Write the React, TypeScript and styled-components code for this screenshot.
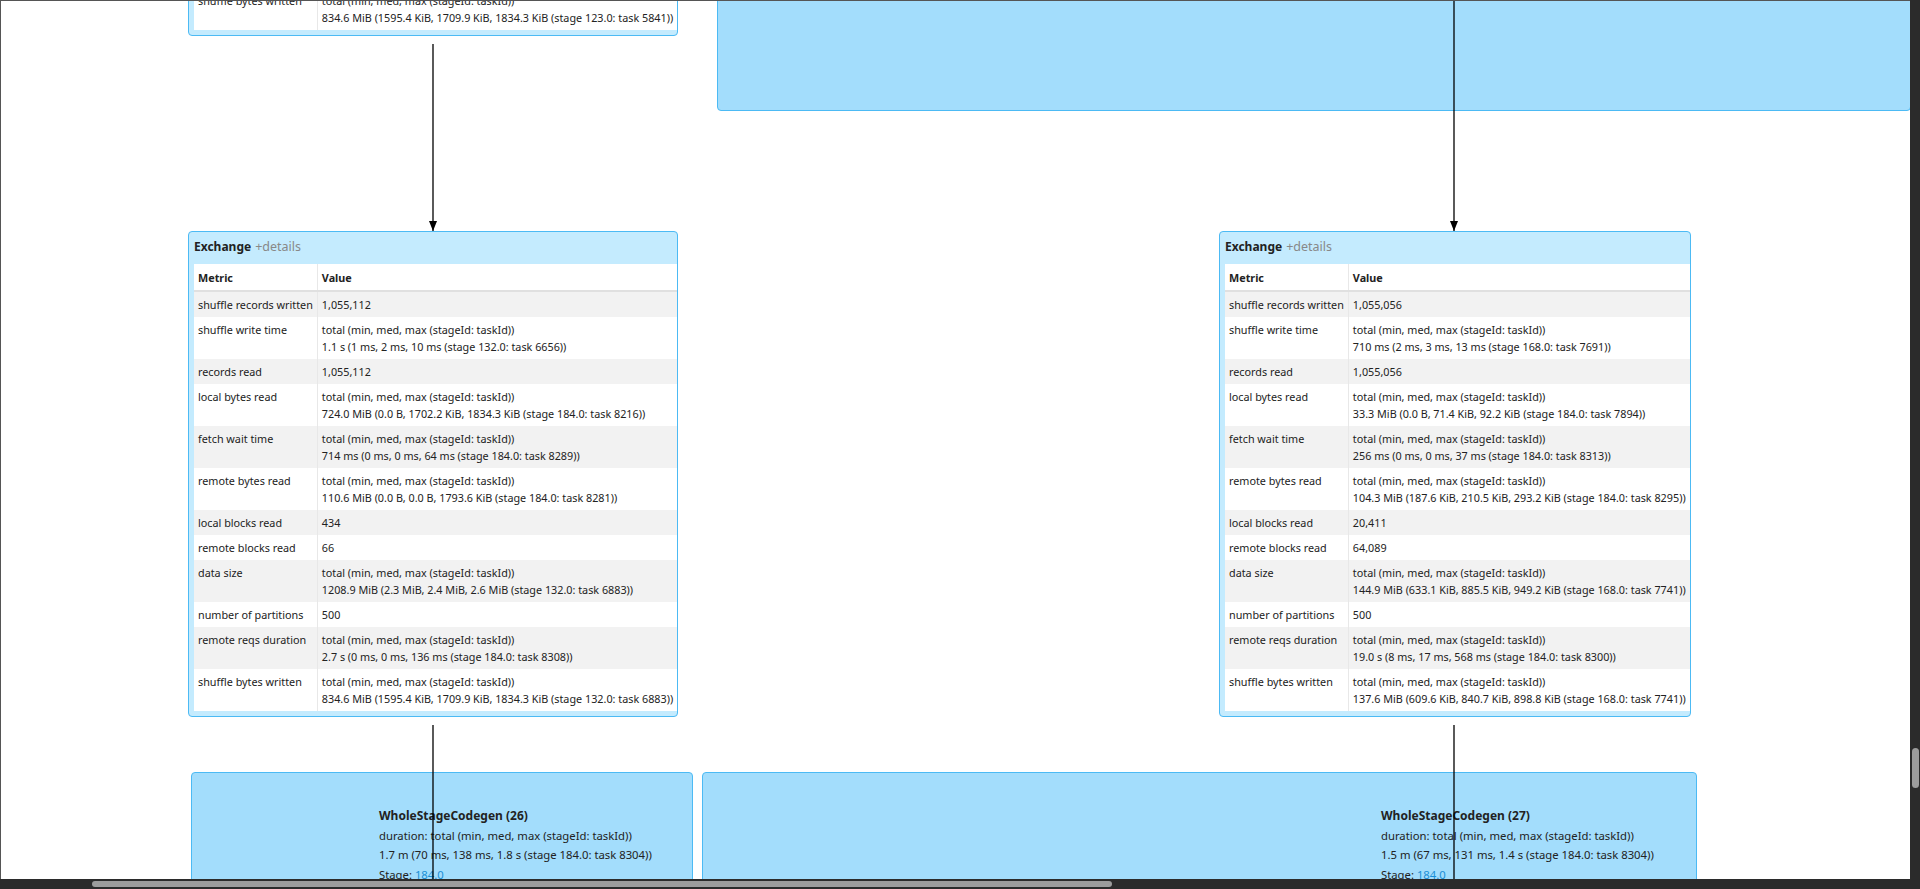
import styled, { createGlobalStyle } from "styled-components"

const Global = createGlobalStyle`
    html, body { margin: 0; padding: 0; overflow: hidden; }
    body { font-family: "Noto Sans", "Open Sans", sans-serif; color: #222; }
`

const Frame = styled.div`
    display: grid;
    grid-template-columns: 1fr 10px;
    grid-template-rows: 1fr 10px;
    width: 1920px;
    height: 889px;
    background: #2b2b2b;
`

const Canvas = styled.div`
    position: relative;
    overflow: hidden;
    background: #fff;
    border-left: 1px solid #555;
    border-top: 1px solid #555;
`

const VBar = styled.div`
    position: relative;
    background: #2b2b2b;
    & .thumb {
        position: absolute;
        left: 2px;
        right: 1px;
        top: 748px;
        height: 40px;
        border-radius: 4px;
        background: #9c9c9c;
    }
`

const HBar = styled.div`
    position: relative;
    background: #2b2b2b;
    & .thumb {
        position: absolute;
        top: 2px;
        bottom: 2px;
        left: 92px;
        width: 1020px;
        border-radius: 4px;
        background: #9c9c9c;
    }
`

const Node = styled.div<{ $x: number; $y: number; $w: number }>`
    position: absolute;
    left: ${p => p.$x}px;
    top: ${p => p.$y}px;
    width: ${p => p.$w}px;
    box-sizing: border-box;
    background: #c4ebfe;
    border: 1.5px solid #4cbaf4;
    border-radius: 4px;
    padding: 0 5px 5px 5px;
`

const NodeTitle = styled.div`
    height: 32px;
    line-height: 30px;
    font-size: 12px;
    font-weight: 700;
    & span { font-weight: 400; color: #888; margin-left: 4px; font-size: 12.5px; }
`

const Table = styled.table`
    width: 100%;
    border-collapse: collapse;
    font-size: 10.8px;
    background: #fff;
    & th {
        text-align: left;
        height: 26px;
        padding: 0 4px;
        border-bottom: 2px solid #e0e0e0;
        font-weight: 700;
    }
    & td {
        vertical-align: top;
        padding: 4px 4px 4px 4px;
        line-height: 17px;
        white-space: nowrap;
    }
    & td:first-child, & th:first-child { width: 112px; border-right: 1px solid #e8e8e8; }
    & tbody tr:nth-child(odd) { background: #f2f2f2; }
`

const Cluster = styled.div<{ $x: number; $y: number; $w: number; $h: number }>`
    position: absolute;
    left: ${p => p.$x}px;
    top: ${p => p.$y}px;
    width: ${p => p.$w}px;
    height: ${p => p.$h}px;
    box-sizing: border-box;
    background: #a3ddfc;
    border: 1.5px solid #4cbaf4;
    border-radius: 4px;
`

const CodegenText = styled.div<{ $x: number }>`
    position: absolute;
    left: ${p => p.$x}px;
    top: 33px;
    font-size: 11.3px;
    line-height: 19.5px;
    white-space: nowrap;
    & b { font-size: 12px; }
    & a { color: #1a8fd6; text-decoration: none; }
`

const Edges = styled.svg`
    position: absolute;
    left: 0;
    top: 0;
    pointer-events: none;
`

type Row = [string, string, string?]

const leftRows: Row[] = [
    ["shuffle records written", "1,055,112"],
    ["shuffle write time", "total (min, med, max (stageId: taskId))", "1.1 s (1 ms, 2 ms, 10 ms (stage 132.0: task 6656))"],
    ["records read", "1,055,112"],
    ["local bytes read", "total (min, med, max (stageId: taskId))", "724.0 MiB (0.0 B, 1702.2 KiB, 1834.3 KiB (stage 184.0: task 8216))"],
    ["fetch wait time", "total (min, med, max (stageId: taskId))", "714 ms (0 ms, 0 ms, 64 ms (stage 184.0: task 8289))"],
    ["remote bytes read", "total (min, med, max (stageId: taskId))", "110.6 MiB (0.0 B, 0.0 B, 1793.6 KiB (stage 184.0: task 8281))"],
    ["local blocks read", "434"],
    ["remote blocks read", "66"],
    ["data size", "total (min, med, max (stageId: taskId))", "1208.9 MiB (2.3 MiB, 2.4 MiB, 2.6 MiB (stage 132.0: task 6883))"],
    ["number of partitions", "500"],
    ["remote reqs duration", "total (min, med, max (stageId: taskId))", "2.7 s (0 ms, 0 ms, 136 ms (stage 184.0: task 8308))"],
    ["shuffle bytes written", "total (min, med, max (stageId: taskId))", "834.6 MiB (1595.4 KiB, 1709.9 KiB, 1834.3 KiB (stage 132.0: task 6883))"],
]

const topRows: Row[] = leftRows.map((r, i) =>
    i === leftRows.length - 1
        ? ["shuffle bytes written", "total (min, med, max (stageId: taskId))", "834.6 MiB (1595.4 KiB, 1709.9 KiB, 1834.3 KiB (stage 123.0: task 5841))"]
        : r)

const rightRows: Row[] = [
    ["shuffle records written", "1,055,056"],
    ["shuffle write time", "total (min, med, max (stageId: taskId))", "710 ms (2 ms, 3 ms, 13 ms (stage 168.0: task 7691))"],
    ["records read", "1,055,056"],
    ["local bytes read", "total (min, med, max (stageId: taskId))", "33.3 MiB (0.0 B, 71.4 KiB, 92.2 KiB (stage 184.0: task 7894))"],
    ["fetch wait time", "total (min, med, max (stageId: taskId))", "256 ms (0 ms, 0 ms, 37 ms (stage 184.0: task 8313))"],
    ["remote bytes read", "total (min, med, max (stageId: taskId))", "104.3 MiB (187.6 KiB, 210.5 KiB, 293.2 KiB (stage 184.0: task 8295))"],
    ["local blocks read", "20,411"],
    ["remote blocks read", "64,089"],
    ["data size", "total (min, med, max (stageId: taskId))", "144.9 MiB (633.1 KiB, 885.5 KiB, 949.2 KiB (stage 168.0: task 7741))"],
    ["number of partitions", "500"],
    ["remote reqs duration", "total (min, med, max (stageId: taskId))", "19.0 s (8 ms, 17 ms, 568 ms (stage 184.0: task 8300))"],
    ["shuffle bytes written", "total (min, med, max (stageId: taskId))", "137.6 MiB (609.6 KiB, 840.7 KiB, 898.8 KiB (stage 168.0: task 7741))"],
]

function Exchange({ x, y, w, rows }: { x: number; y: number; w: number; rows: Row[] }) {
    return (
        <Node $x={x} $y={y} $w={w}>
            <NodeTitle>Exchange<span>+details</span></NodeTitle>
            <Table>
                <thead><tr><th>Metric</th><th>Value</th></tr></thead>
                <tbody>
                    {rows.map(r => (
                        <tr key={r[0]}>
                            <td>{r[0]}</td>
                            <td>{r[1]}{r[2] && <><br />{r[2]}</>}</td>
                        </tr>
                    ))}
                </tbody>
            </Table>
        </Node>
    )
}

function Codegen({ x, w, tx, id, dur }: { x: number; w: number; tx: number; id: number; dur: string }) {
    return (
        <Cluster $x={x} $y={771} $w={w} $h={140}>
            <CodegenText $x={tx}>
                <b>WholeStageCodegen ({id})</b><br />
                duration: total (min, med, max (stageId: taskId))<br />
                {dur}<br />
                Stage: <a href="#">184.0</a>
            </CodegenText>
        </Cluster>
    )
}

export default function App() {
    return (
        <Frame>
            <Global />
            <Canvas>
                <Cluster $x={716} $y={-10} $w={1194} $h={120} />
                <Exchange x={187} y={-451} w={490} rows={topRows} />
                <Exchange x={187} y={230} w={490} rows={leftRows} />
                <Exchange x={1218} y={230} w={472} rows={rightRows} />
                <Codegen x={190} w={502} tx={187} id={26} dur="1.7 m (70 ms, 138 ms, 1.8 s (stage 184.0: task 8304))" />
                <Codegen x={701} w={995} tx={678} id={27} dur="1.5 m (67 ms, 131 ms, 1.4 s (stage 184.0: task 8304))" />
                <Edges width={1910} height={880}>
                    <line x1={432} y1={43} x2={432} y2={230} stroke="#000" strokeWidth={1.3} />
                    <path d="M428 220 L436 220 L432 230 Z" fill="#000" />
                    <line x1={1453} y1={0} x2={1453} y2={230} stroke="#000" strokeWidth={1.3} />
                    <path d="M1449 220 L1457 220 L1453 230 Z" fill="#000" />
                    <line x1={432} y1={724} x2={432} y2={880} stroke="#000" strokeWidth={1.3} />
                    <line x1={1453} y1={724} x2={1453} y2={880} stroke="#000" strokeWidth={1.3} />
                </Edges>
            </Canvas>
            <VBar><div className="thumb" /></VBar>
            <HBar><div className="thumb" /></HBar>
            <div />
        </Frame>
    )
}
